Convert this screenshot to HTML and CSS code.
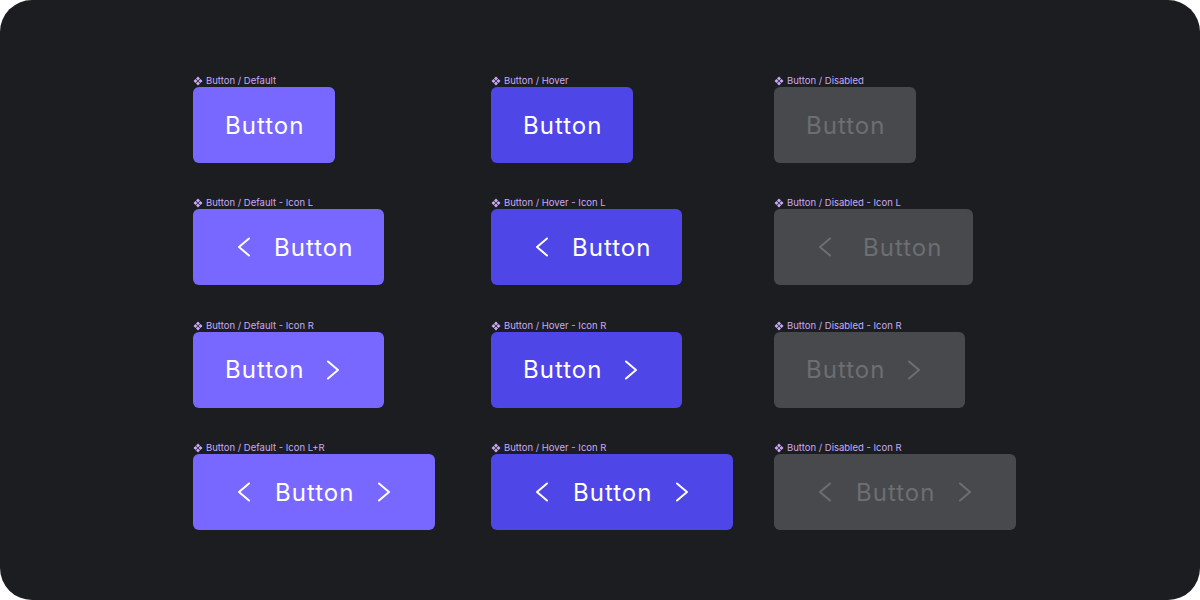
FILE: index.html
```html
<!DOCTYPE html>
<html>
<head>
<meta charset="utf-8">
<link rel="stylesheet" href="styles.css">
</head>
<body>
<svg width="0" height="0" class="defs">
  <defs>
    <symbol id="comp" viewBox="0 0 10 10">
      <path d="M5 0.5L7 2.5L5 4.5L3 2.5Z M5 5.5L7 7.5L5 9.5L3 7.5Z M2.5 3L4.5 5L2.5 7L0.5 5Z M7.5 3L9.5 5L7.5 7L5.5 5Z"/>
    </symbol>
    <symbol id="cl" viewBox="0 0 32 32">
      <path d="M24 7.5L14 16L24 24.5" fill="none" stroke="currentColor" stroke-width="2" stroke-linecap="round" stroke-linejoin="round"/>
    </symbol>
    <symbol id="cr" viewBox="0 0 32 32">
      <path d="M8 7.5L18 16L8 24.5" fill="none" stroke="currentColor" stroke-width="2" stroke-linecap="round" stroke-linejoin="round"/>
    </symbol>
  </defs>
</svg>
<div class="panel">
  <div class="grid">
    <div class="cell">
      <div class="label"><svg class="ci"><use href="#comp"/></svg>Button / Default</div>
      <div class="btn default"><span class="txt">Button</span></div>
    </div>
    <div class="cell">
      <div class="label"><svg class="ci"><use href="#comp"/></svg>Button / Hover</div>
      <div class="btn hover"><span class="txt">Button</span></div>
    </div>
    <div class="cell">
      <div class="label"><svg class="ci"><use href="#comp"/></svg>Button / Disabled</div>
      <div class="btn disabled"><span class="txt">Button</span></div>
    </div>

    <div class="cell">
      <div class="label"><svg class="ci"><use href="#comp"/></svg>Button / Default - Icon L</div>
      <div class="btn default"><svg class="ico"><use href="#cl"/></svg><span class="txt">Button</span></div>
    </div>
    <div class="cell">
      <div class="label"><svg class="ci"><use href="#comp"/></svg>Button / Hover - Icon L</div>
      <div class="btn hover"><svg class="ico"><use href="#cl"/></svg><span class="txt">Button</span></div>
    </div>
    <div class="cell">
      <div class="label"><svg class="ci"><use href="#comp"/></svg>Button / Disabled - Icon L</div>
      <div class="btn disabled wide-gap"><svg class="ico"><use href="#cl"/></svg><span class="txt">Button</span></div>
    </div>

    <div class="cell">
      <div class="label"><svg class="ci"><use href="#comp"/></svg>Button / Default - Icon R</div>
      <div class="btn default"><span class="txt">Button</span><svg class="ico"><use href="#cr"/></svg></div>
    </div>
    <div class="cell">
      <div class="label"><svg class="ci"><use href="#comp"/></svg>Button / Hover - Icon R</div>
      <div class="btn hover"><span class="txt">Button</span><svg class="ico"><use href="#cr"/></svg></div>
    </div>
    <div class="cell">
      <div class="label"><svg class="ci"><use href="#comp"/></svg>Button / Disabled - Icon R</div>
      <div class="btn disabled"><span class="txt">Button</span><svg class="ico"><use href="#cr"/></svg></div>
    </div>

    <div class="cell">
      <div class="label"><svg class="ci"><use href="#comp"/></svg>Button / Default - Icon L+R</div>
      <div class="btn default both"><svg class="ico"><use href="#cl"/></svg><span class="txt">Button</span><svg class="ico"><use href="#cr"/></svg></div>
    </div>
    <div class="cell">
      <div class="label"><svg class="ci"><use href="#comp"/></svg>Button / Hover - Icon R</div>
      <div class="btn hover both"><svg class="ico"><use href="#cl"/></svg><span class="txt">Button</span><svg class="ico"><use href="#cr"/></svg></div>
    </div>
    <div class="cell">
      <div class="label"><svg class="ci"><use href="#comp"/></svg>Button / Disabled - Icon R</div>
      <div class="btn disabled both"><svg class="ico"><use href="#cl"/></svg><span class="txt">Button</span><svg class="ico"><use href="#cr"/></svg></div>
    </div>
  </div>
</div>
</body>
</html>
```

FILE: styles.css
```css
html, body {
  margin: 0;
  padding: 0;
  background: #ffffff;
}
.defs {
  position: absolute;
  width: 0;
  height: 0;
  overflow: hidden;
}
.panel {
  width: 1200px;
  height: 600px;
  background: #1c1d21;
  border-radius: 32px;
  box-sizing: border-box;
  padding: 75px 0 0 193px;
  font-family: Inter, "Noto Sans", sans-serif;
}
.grid {
  display: grid;
  grid-template-columns: 298px 283px auto;
  row-gap: 34.4px;
}
.cell {
  display: flex;
  flex-direction: column;
  align-items: flex-start;
}
.label {
  display: flex;
  align-items: center;
  height: 12px;
  font-size: 9.5px;
  line-height: 12px;
  color: #c9aaf6;
  white-space: nowrap;
}
.ci {
  width: 10px;
  height: 10px;
  margin-right: 3px;
  fill: #c9aaf6;
}
.btn {
  display: flex;
  align-items: center;
  gap: 17px;
  height: 76px;
  padding: 0 32px;
  border-radius: 6px;
  font-size: 24px;
  line-height: 29px;
  font-weight: 400;
  letter-spacing: 1px;
  white-space: nowrap;
}
.txt {
  margin-right: -1px;
}
.btn.wide-gap {
  gap: 25px;
}
.btn.both {
  gap: 18px;
}
.ico {
  width: 32px;
  height: 32px;
  flex: none;
}
.default {
  background: #7868ff;
  color: #ffffff;
}
.hover {
  background: #4f46e8;
  color: #ffffff;
}
.disabled {
  background: #47494c;
  color: #6c6f72;
}
```
